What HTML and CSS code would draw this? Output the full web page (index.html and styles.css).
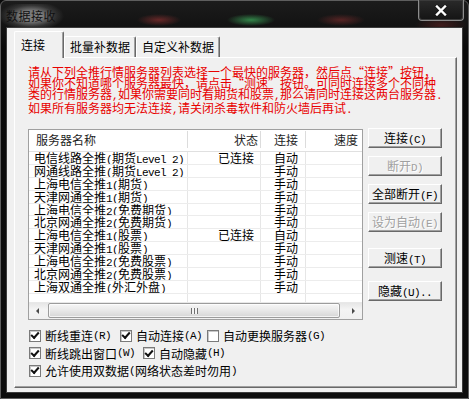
FILE: index.html
```html
<!DOCTYPE html>
<html lang="zh-CN">
<head>
    <meta charset="UTF-8">
    <title>数据接收</title>
    <link rel="stylesheet" href="styles.css">
</head>
<body>
    <div class="window">
        <!-- Title bar -->
        <div class="titlebar">
            <span class="title">数据接收</span>
            <div class="close-btn">
                <svg width="14" height="11" viewBox="0 0 14 11">
                    <path d="M3 1.5 L11 9.5 M11 1.5 L3 9.5" stroke="#1a1a1a" stroke-width="4" stroke-linecap="square"/>
                    <path d="M3 1.5 L11 9.5 M11 1.5 L3 9.5" stroke="#ffffff" stroke-width="2.4" stroke-linecap="square"/>
                </svg>
            </div>
        </div>

        <div class="client">
            <!-- Tabs -->
            <div class="tabs">
                <div class="tab active">连接</div>
                <div class="tab">批量补数据</div>
                <div class="tab">自定义补数据</div>
            </div>

            <div class="panel">
                <p class="notice">
                    请从下列全推行情服务器列表选择一个最快的服务器，然后点“连接”按钮，<br>
                    如果你不知道哪个服务器最快，请点击“测速”按钮。可同时连接多个不同种<br>
                    类的行情服务器<span class="en">,</span>如果你需要同时看期货和股票<span class="en">,</span>那么请同时连接这两台服务器<span class="en">.</span><br>
                    如果所有服务器均无法连接<span class="en">,</span>请关闭杀毒软件和防火墙后再试<span class="en">.</span>
                </p>

                <div class="main">
                    <!-- Server list -->
                    <div class="server-list">
                        <div class="list-head">
                            <div class="col col-name">服务器名称</div>
                            <div class="col col-status">状态</div>
                            <div class="col col-conn">连接</div>
                            <div class="col col-speed">速度</div>
                        </div>
                        <div class="list-body">
                            <div class="row">
                                <div class="col col-name">电信线路全推<span class="en">(</span>期货<span class="en">Level 2)</span></div>
                                <div class="col col-status">已连接</div>
                                <div class="col col-conn">自动</div>
                                <div class="col col-speed"></div>
                            </div>
                            <div class="row">
                                <div class="col col-name">网通线路全推<span class="en">(</span>期货<span class="en">Level 2)</span></div>
                                <div class="col col-status"></div>
                                <div class="col col-conn">手动</div>
                                <div class="col col-speed"></div>
                            </div>
                            <div class="row">
                                <div class="col col-name">上海电信全推<span class="en">1(</span>期货<span class="en">)</span></div>
                                <div class="col col-status"></div>
                                <div class="col col-conn">手动</div>
                                <div class="col col-speed"></div>
                            </div>
                            <div class="row">
                                <div class="col col-name">天津网通全推<span class="en">1(</span>期货<span class="en">)</span></div>
                                <div class="col col-status"></div>
                                <div class="col col-conn">手动</div>
                                <div class="col col-speed"></div>
                            </div>
                            <div class="row">
                                <div class="col col-name">上海电信全推<span class="en">2(</span>免费期货<span class="en">)</span></div>
                                <div class="col col-status"></div>
                                <div class="col col-conn">手动</div>
                                <div class="col col-speed"></div>
                            </div>
                            <div class="row">
                                <div class="col col-name">北京网通全推<span class="en">2(</span>免费期货<span class="en">)</span></div>
                                <div class="col col-status"></div>
                                <div class="col col-conn">手动</div>
                                <div class="col col-speed"></div>
                            </div>
                            <div class="row">
                                <div class="col col-name">上海电信全推<span class="en">1(</span>股票<span class="en">)</span></div>
                                <div class="col col-status">已连接</div>
                                <div class="col col-conn">自动</div>
                                <div class="col col-speed"></div>
                            </div>
                            <div class="row">
                                <div class="col col-name">天津网通全推<span class="en">1(</span>股票<span class="en">)</span></div>
                                <div class="col col-status"></div>
                                <div class="col col-conn">手动</div>
                                <div class="col col-speed"></div>
                            </div>
                            <div class="row">
                                <div class="col col-name">上海电信全推<span class="en">2(</span>免费股票<span class="en">)</span></div>
                                <div class="col col-status"></div>
                                <div class="col col-conn">手动</div>
                                <div class="col col-speed"></div>
                            </div>
                            <div class="row">
                                <div class="col col-name">北京网通全推<span class="en">2(</span>免费股票<span class="en">)</span></div>
                                <div class="col col-status"></div>
                                <div class="col col-conn">手动</div>
                                <div class="col col-speed"></div>
                            </div>
                            <div class="row">
                                <div class="col col-name">上海双通全推<span class="en">(</span>外汇外盘<span class="en">)</span></div>
                                <div class="col col-status"></div>
                                <div class="col col-conn">手动</div>
                                <div class="col col-speed"></div>
                            </div>
                        </div>
                        <div class="hscroll">
                            <div class="arrow arrow-left"></div>
                            <div class="track">
                                <div class="thumb"><span class="grip"></span></div>
                            </div>
                            <div class="arrow arrow-right"></div>
                        </div>
                    </div>

                    <!-- Action buttons -->
                    <div class="actions">
                        <button class="btn">连接<span class="en">(C)</span></button>
                        <button class="btn" disabled>断开<span class="en">D)</span></button>
                        <button class="btn">全部断开<span class="en">(F)</span></button>
                        <button class="btn" disabled>设为自动<span class="en">(E)</span></button>
                        <button class="btn btn-speed">测速<span class="en">(T)</span></button>
                        <button class="btn btn-hide">隐藏<span class="en">(U)..</span></button>
                    </div>
                </div>

                <!-- Options -->
                <div class="options">
                    <div class="opt-row">
                        <label class="check opt-reconnect"><span class="box checked"></span>断线重连<span class="en">(R)</span></label>
                        <label class="check opt-autoconn"><span class="box checked"></span>自动连接<span class="en">(A)</span></label>
                        <label class="check"><span class="box"></span>自动更换服务器<span class="en">(G)</span></label>
                    </div>
                    <div class="opt-row">
                        <label class="check opt-popup"><span class="box checked"></span>断线跳出窗口<span class="en">(W)</span></label>
                        <label class="check"><span class="box checked"></span>自动隐藏<span class="en">(H)</span></label>
                    </div>
                    <div class="opt-row">
                        <label class="check"><span class="box checked"></span>允许使用双数据<span class="en">(</span>网络状态差时勿用<span class="en">)</span></label>
                    </div>
                </div>
            </div>
        </div>
    </div>
</body>
</html>
```

FILE: styles.css
```css
* {
    margin: 0;
    padding: 0;
    box-sizing: border-box;
}

body {
    width: 469px;
    height: 399px;
    overflow: hidden;
    background: #0b0b0b;
    font-family: "Noto Sans CJK SC", sans-serif;
    font-size: 12px;
    color: #000;
}

/* half-width latin, SimSun style: 6px advance */
.en {
    font-family: "Liberation Mono", monospace;
    font-size: 11px;
    letter-spacing: -0.6px;
}

.window {
    width: 469px;
    height: 399px;
    display: flex;
    flex-direction: column;
    border: 1px solid #5e5e5e;
    border-radius: 6px 6px 0 0;
    background: linear-gradient(180deg, #1c1c1c 0%, #0a0a0a 12%, #0d0d0d 100%);
}

.titlebar {
    height: 27px;
    display: flex;
    justify-content: space-between;
    align-items: flex-start;
    background:
        radial-gradient(ellipse 22px 6px at 158px 19px, rgba(170, 55, 55, 0.55), transparent),
        radial-gradient(ellipse 24px 6px at 250px 19px, rgba(60, 170, 90, 0.75), transparent),
        radial-gradient(ellipse 24px 6px at 340px 19px, rgba(150, 50, 50, 0.5), transparent),
        radial-gradient(ellipse 26px 8px at 440px 24px, rgba(120, 40, 40, 0.45), transparent);
}

.title {
    margin: 3px 0 0 0;
    padding: 3px 8px 4px 5px;
    letter-spacing: 0.5px;
    color: #111;
    background: radial-gradient(ellipse 52% 62% at 48% 50%, rgba(140, 140, 140, 0.85) 35%, rgba(100, 100, 100, 0.35) 72%, transparent 100%);
}

.close-btn {
    width: 46px;
    height: 21px;
    margin: -1px 4px 0 0;
    border: 1px solid #8c8c8c;
    border-top: none;
    border-radius: 0 0 4px 4px;
    box-shadow: inset 0 0 0 1px #3a3a3a;
    background: linear-gradient(180deg, #2a2a2a, #141414);
    display: flex;
    align-items: center;
    justify-content: center;
}

.client {
    flex: 1;
    margin: 0 6px 6px 6px;
    padding: 3px 5px 4px 7px;
    background: #f0f0f0;
    box-shadow: 0 0 0 1px #3c3c3c;
    display: flex;
    flex-direction: column;
}

/* Tabs */
.tabs {
    height: 26px;
    display: flex;
    align-items: flex-end;
}

.tab {
    height: 21px;
    padding: 0 5px;
    line-height: 20px;
    border-top: 1px solid #fff;
    border-left: 1px solid #fff;
    border-right: 1px solid #696969;
    box-shadow: inset -1px 0 #a0a0a0;
    border-radius: 2px 2px 0 0;
    white-space: nowrap;
}

.tab.active {
    height: 27px;
    width: 50px;
    padding: 0 6px;
    line-height: 26px;
    margin-bottom: -1px;
    background: #f0f0f0;
    position: relative;
    z-index: 1;
}

.panel {
    flex: 1;
    padding: 8px 13px 0 13px;
    border-top: 1px solid #fff;
    border-left: 1px solid #fff;
    border-right: 1px solid #696969;
    border-bottom: 1px solid #696969;
    box-shadow: inset -1px -1px #a0a0a0;
}

.notice {
    color: #e80000;
    line-height: 11px;
    white-space: nowrap;
    height: 44px;
}

.main {
    margin-top: 19px;
    display: flex;
    gap: 5px;
    align-items: flex-start;
}

/* Server list */
.server-list {
    width: 335px;
    height: 191px;
    border: 1px solid #a0a0a0;
    background: #fff;
    display: flex;
    flex-direction: column;
}

.list-head,
.row {
    display: flex;
    white-space: nowrap;
}

.list-head {
    height: 22px;
    border-bottom: 1px solid #e0e0e0;
    line-height: 20px;
    color: #1e1e1e;
}

.list-head .col {
    border-right: 1px solid #dcdcdc;
    margin: 1px 0 3px 0;
    line-height: 18px;
}

.list-head .col-speed {
    border-right: none;
}

.col-name {
    width: 159px;
    padding-left: 5px;
    overflow: hidden;
}

.list-head .col-name {
    padding-left: 7px;
}

.col-status {
    width: 73px;
    text-align: right;
    padding-right: 7px;
}

.list-head .col-status {
    padding-right: 2px;
}

.col-conn {
    width: 45px;
    padding-left: 13px;
}

.col-speed {
    width: 56px;
    text-align: right;
    padding-right: 4px;
}

.list-body {
    flex: 1;
    background:
        linear-gradient(#e6e6e6, #e6e6e6) 158px 0 / 1px 100% no-repeat,
        linear-gradient(#e6e6e6, #e6e6e6) 231px 0 / 1px 100% no-repeat,
        linear-gradient(#e6e6e6, #e6e6e6) 276px 0 / 1px 100% no-repeat;
}

.row {
    height: 12.9px;
    line-height: 12px;
    border-bottom: 1px solid #ececec;
}

/* Horizontal scrollbar */
.hscroll {
    height: 17px;
    display: flex;
    background: linear-gradient(180deg, #e6e6e6, #f4f4f4 40%, #f0f0f0);
    border-top: 1px solid #e8e8e8;
}

.arrow {
    width: 17px;
    display: flex;
    align-items: center;
    justify-content: center;
}

.arrow::before {
    content: "";
    border-top: 3px solid transparent;
    border-bottom: 3px solid transparent;
}

.arrow-left::before {
    border-right: 3px solid #4a4a4a;
}

.arrow-right::before {
    border-left: 3px solid #4a4a4a;
}

.track {
    flex: 1;
    padding: 0 5px 0 2px;
}

.thumb {
    height: 15px;
    border: 1px solid #9c9c9c;
    border-radius: 2px;
    background: linear-gradient(180deg, #f6f6f6 0%, #e8e8e8 50%, #d6d6d6 100%);
    box-shadow: inset 0 0 0 1px rgba(255, 255, 255, 0.7);
    display: flex;
    align-items: center;
    justify-content: center;
}

.grip {
    width: 7px;
    height: 6px;
    background: repeating-linear-gradient(90deg, #707070 0 1px, #f4f4f4 1px 3px);
}

/* Buttons */
.actions {
    width: 74px;
    margin-top: -1px;
    display: flex;
    flex-direction: column;
    gap: 8px;
}

.btn {
    height: 20px;
    font-family: inherit;
    font-size: 12px;
    color: #000;
    background: #f0f0f0;
    border-top: 1px solid #fff;
    border-left: 1px solid #fff;
    border-right: 1px solid #696969;
    border-bottom: 1px solid #696969;
    box-shadow: inset -1px -1px #a0a0a0;
    line-height: 17px;
    white-space: nowrap;
}

.btn:disabled {
    color: #a0a0a0;
    text-shadow: 1px 1px #fff;
}

.btn-speed {
    margin-top: 8px;
}

.btn-hide {
    margin-top: 5px;
}

/* Options */
.options {
    margin-top: 7px;
    margin-left: 1px;
}

.opt-row {
    height: 17.5px;
    display: flex;
    align-items: center;
}

.check {
    display: flex;
    align-items: center;
    white-space: nowrap;
}

.opt-reconnect {
    width: 91px;
}

.opt-autoconn {
    width: 87px;
}

.opt-popup {
    width: 114px;
}

.box {
    width: 12px;
    height: 12px;
    margin-right: 4px;
    border: 1px solid #7a7a7a;
    background: #fff;
    box-shadow: inset 1px 1px #c8c8c8;
    display: flex;
    align-items: center;
    justify-content: center;
}

.box.checked::before {
    content: "";
    width: 6px;
    height: 3px;
    margin-top: -2px;
    border-left: 2px solid #111;
    border-bottom: 2px solid #111;
    transform: rotate(-48deg);
}
```
